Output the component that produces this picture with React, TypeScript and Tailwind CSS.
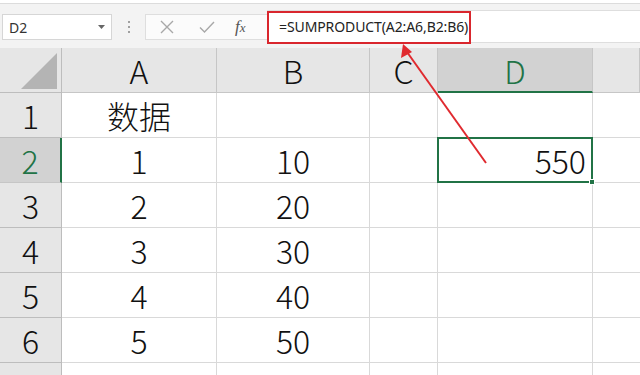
import React from "react";

const font = { fontFamily: '"Noto Sans CJK SC", "Noto Sans", sans-serif' };

const cols = ["A", "B", "C", "D", ""];
const rows: [string, string, string, string, string, string][] = [
  ["1", "数据", "", "", "", ""],
  ["2", "1", "10", "", "550", ""],
  ["3", "2", "20", "", "", ""],
  ["4", "3", "30", "", "", ""],
  ["5", "4", "40", "", "", ""],
  ["6", "5", "50", "", "", ""],
  ["7", "", "", "", "", ""],
];

export default function App() {
  return (
    <div className="relative w-[640px] h-[375px] overflow-hidden bg-white" style={font}>
      {/* toolbar */}
      <div className="h-[48px] bg-[#f3f3f3] border-t border-[#dcdcdc] mt-[3px] flex items-start pt-[9px]">
        <div className="ml-[2px] mt-[1px] w-[110px] h-[26px] bg-white border border-[#d6d6d6] flex items-center justify-between pl-[6px] pr-[6px]">
          <span className="text-[14px] text-[#333]" style={{ fontFamily: '"Noto Sans", sans-serif' }}>D2</span>
          <svg width="7" height="4" viewBox="0 0 7 4"><path d="M0 0h7L3.5 4z" fill="#666" /></svg>
        </div>
        <div className="w-[33px] h-[28px] flex flex-col items-center justify-center gap-[3px]">
          <span className="w-[2px] h-[2px] bg-[#a0a0a0]" />
          <span className="w-[2px] h-[2px] bg-[#a0a0a0]" />
          <span className="w-[2px] h-[2px] bg-[#a0a0a0]" />
        </div>
        <div className="mt-[1px] w-[122px] h-[26px] bg-[#fbfbfb] border-y border-l border-[#dedede] flex items-center">
          <svg className="ml-[14px]" width="14" height="14" viewBox="0 0 14 14"><path d="M1 1L13 13M13 1L1 13" stroke="#a8a8a8" strokeWidth="1.4" /></svg>
          <svg className="ml-[25px]" width="16" height="14" viewBox="0 0 16 14"><path d="M1 7.5L5.5 12L15 2" stroke="#a8a8a8" strokeWidth="1.4" fill="none" /></svg>
          <span className="ml-[20px] text-[17px] italic text-[#555]" style={{ fontFamily: '"Liberation Serif", serif' }}>f<span className="text-[13px]">x</span></span>
        </div>
        <div className="flex-1 -mt-[3px] h-[33px] bg-white border-y border-[#dedede] relative">
          <div className="absolute left-0 top-0 w-[204px] h-[33px] border-2 border-[#d9262d]" />
          <div className="pl-[12px] h-full flex items-center text-[14px] text-[#222] tracking-[-0.1px]" style={{ fontFamily: '"Noto Sans", sans-serif' }}>
            =SUMPRODUCT(A2:A6,B2:B6)
          </div>
        </div>
      </div>

      {/* grid */}
      <div className="grid grid-cols-[62px_155px_153px_68px_155px_1fr] grid-rows-[45px_45px_45px_45px_45px_45px_45px_45px] font-light text-[32px] text-[#111] -mt-[3px]">
        <div className="bg-[#e6e6e6] border-r border-b border-[#bdbdbd] relative">
          <svg className="absolute right-[4px] bottom-[3px]" width="36" height="36" viewBox="0 0 36 36"><path d="M36 0V36H0z" fill="#b4b4b4" /></svg>
        </div>
        {cols.map((c, i) => (
          <div
            key={i}
            className={
              c === "D"
                ? "bg-[#d2d2d2] border-r border-[#c6c6c6] border-b-2 border-b-[#217346] text-[#217346] flex items-center justify-center leading-none"
                : "bg-[#e6e6e6] border-r border-b border-[#c6c6c6] flex items-center justify-center leading-none"
            }
          >
            {c}
          </div>
        ))}
        {rows.map((r) => (
          <React.Fragment key={r[0]}>
            <div
              className={
                r[0] === "2"
                  ? "bg-[#d2d2d2] border-r-2 border-r-[#217346] border-b border-[#c6c6c6] text-[#217346] flex items-center justify-center leading-none"
                  : "bg-[#e6e6e6] border-r border-b border-[#bdbdbd] flex items-center justify-center leading-none"
              }
            >
              {r[0]}
            </div>
            <div className="border-r border-b border-[#d9d9d9] flex items-center justify-center leading-none">{r[1]}</div>
            <div className="border-r border-b border-[#d9d9d9] flex items-center justify-center leading-none">{r[2]}</div>
            <div className="border-r border-b border-[#d9d9d9]" />
            {r[0] === "2" ? (
              <div className="relative -mt-[1px] -ml-[1px] border-2 border-[#217346] flex items-center justify-end pr-[5px] leading-none">
                {r[4]}
                <span className="absolute -right-[4px] -bottom-[4px] w-[6px] h-[6px] bg-[#217346] border border-white" />
              </div>
            ) : (
              <div className="border-r border-b border-[#d9d9d9]" />
            )}
            <div className="border-b border-[#d9d9d9]" />
          </React.Fragment>
        ))}
      </div>

      {/* annotation arrow */}
      <svg className="absolute left-0 top-0 pointer-events-none" width="640" height="375">
        <line x1="486" y1="163" x2="407" y2="52" stroke="#e02a2f" strokeWidth="2" />
        <path d="M403 44L401 58L412 52z" fill="#e02a2f" />
      </svg>
    </div>
  );
}
